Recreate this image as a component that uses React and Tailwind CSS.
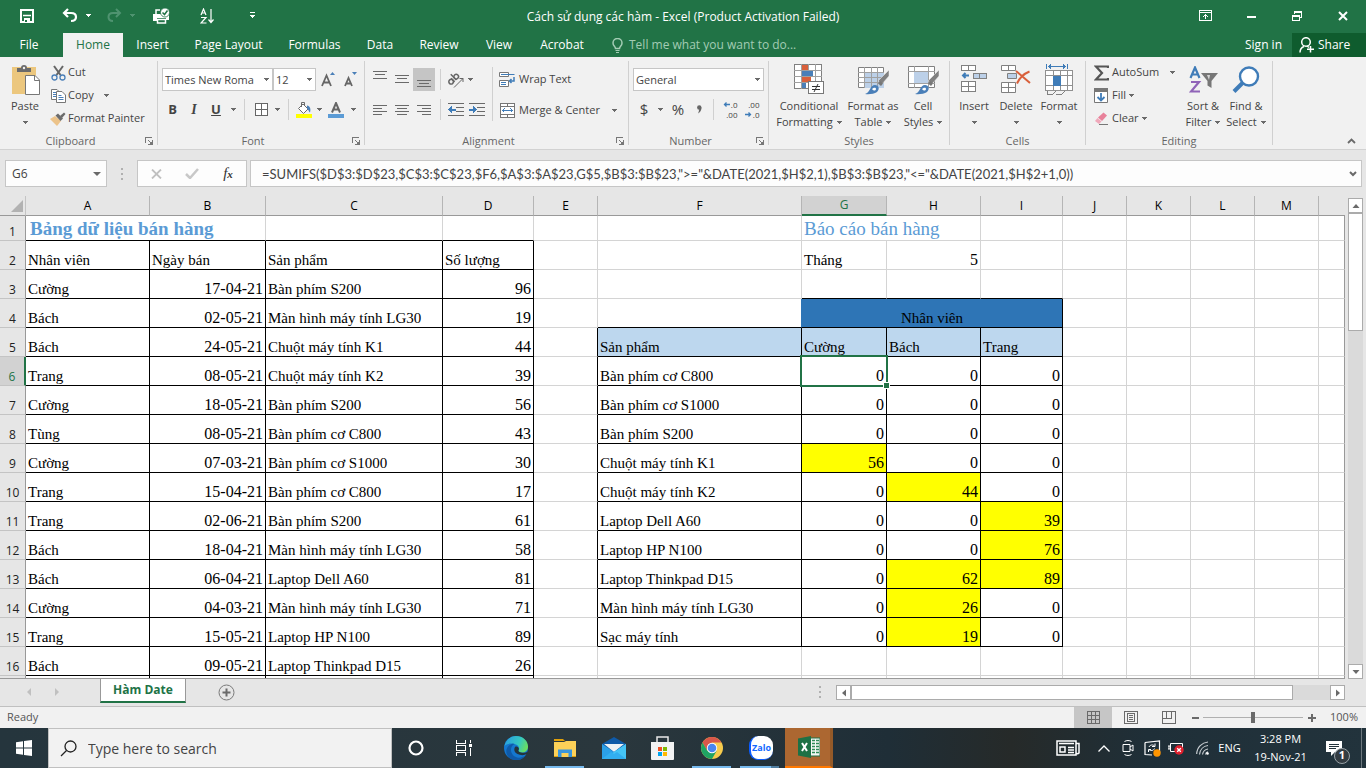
import clsx from 'clsx';

// ---------- spreadsheet data ----------

const SALES = [
  ['Cường', '17-04-21', 'Bàn phím S200', 96],
  ['Bách', '02-05-21', 'Màn hình máy tính LG30', 19],
  ['Bách', '24-05-21', 'Chuột máy tính K1', 44],
  ['Trang', '08-05-21', 'Chuột máy tính K2', 39],
  ['Cường', '18-05-21', 'Bàn phím S200', 56],
  ['Tùng', '08-05-21', 'Bàn phím cơ C800', 43],
  ['Cường', '07-03-21', 'Bàn phím cơ S1000', 30],
  ['Trang', '15-04-21', 'Bàn phím cơ C800', 17],
  ['Trang', '02-06-21', 'Bàn phím S200', 61],
  ['Bách', '18-04-21', 'Màn hình máy tính LG30', 58],
  ['Bách', '06-04-21', 'Laptop Dell A60', 81],
  ['Cường', '04-03-21', 'Màn hình máy tính LG30', 71],
  ['Trang', '15-05-21', 'Laptop HP N100', 89],
  ['Bách', '09-05-21', 'Laptop Thinkpad D15', 26],
];

const REPORT = {
  6: ['Bàn phím cơ C800', 0, 0, 0],
  7: ['Bàn phím cơ S1000', 0, 0, 0],
  8: ['Bàn phím S200', 0, 0, 0],
  9: ['Chuột máy tính K1', 56, 0, 0],
  10: ['Chuột máy tính K2', 0, 44, 0],
  11: ['Laptop Dell A60', 0, 0, 39],
  12: ['Laptop HP N100', 0, 0, 76],
  13: ['Laptop Thinkpad D15', 0, 62, 89],
  14: ['Màn hình máy tính LG30', 0, 26, 0],
  15: ['Sạc máy tính', 0, 19, 0],
};

const COLUMNS = [
  ['A', 'w-[124px]'],
  ['B', 'w-[116px]'],
  ['C', 'w-[177px]'],
  ['D', 'w-[91px]'],
  ['E', 'w-[64px]'],
  ['F', 'w-[204px]'],
  ['G', 'w-[85px]'],
  ['H', 'w-[94px]'],
  ['I', 'w-[82px]'],
  ['J', 'w-[64px]'],
  ['K', 'w-[64px]'],
  ['L', 'w-[64px]'],
  ['M', 'w-[64px]'],
  ['', ''],
];

const TABS = [
  ['File', 'w-[58px]'],
  ['Home', 'w-[60px]'],
  ['Insert', 'w-[59px]'],
  ['Page Layout', 'w-[93px]'],
  ['Formulas', 'w-[79px]'],
  ['Data', 'w-[52px]'],
  ['Review', 'w-[66px]'],
  ['View', 'w-[54px]'],
  ['Acrobat', 'w-[72px]'],
];

// ---------- small pieces ----------

function Svg({ w, h, crisp, className, children }) {
  return (
    <svg
      width={w}
      height={h}
      viewBox={`0 0 ${w} ${h}`}
      fill="none"
      shapeRendering={crisp ? 'crispEdges' : undefined}
      className={clsx('shrink-0', className)}
      aria-hidden="true"
    >
      {children}
    </svg>
  );
}

const Caret = ({ className = 'text-[#6a6a6a]' }) => (
  <Svg w={5} h={3} crisp className={className}>
    <path d="M0 0h5v1H0zM1 1h3v1H1zM2 2h1v1H2z" fill="currentColor" />
  </Svg>
);

const Separator = ({ className }) => <span className={clsx('w-px shrink-0 bg-[#d0d0d0]', className)} />;

// Horizontal strokes used by every paragraph/alignment icon
const Lines = ({ rows }) => (
  <Svg w={14} h={19} crisp>
    {rows.map(([x, y, len]) => (
      <rect key={`${x}-${y}`} x={x} y={y} width={len} height="1" fill="#6a6a6a" />
    ))}
  </Svg>
);

function ToolButton({ label, className, children }) {
  return (
    <button aria-label={label} className={clsx('flex h-[23px] shrink-0 items-center justify-center', className)}>
      {children}
    </button>
  );
}

function BigButton({ icon, lines, className }) {
  const [first, second] = lines;
  return (
    <button className={clsx('flex shrink-0 flex-col items-center whitespace-nowrap pt-1 leading-4', className)}>
      <span className="flex h-[37px] items-center">{icon}</span>
      <span>{first}</span>
      <span className="flex h-4 items-center gap-1">
        {second}
        <Caret />
      </span>
    </button>
  );
}

function SmallButton({ icon, label, caret, gap = 'gap-1' }) {
  return (
    <button className={clsx('flex h-[23px] items-center whitespace-nowrap', gap)}>
      <span className="flex w-4 justify-center">{icon}</span>
      {label}
      {caret && <Caret />}
    </button>
  );
}

function Group({ title, launcher, className, children }) {
  return (
    <section aria-label={title} className={clsx('flex shrink-0 border-0', className)}>
      <div className="flex min-w-0 flex-1 flex-col">
        <div className="flex h-[75px]">{children}</div>
        <div className="flex h-[17px] items-center pt-px">
          <span className="flex-1 text-center text-[#666]">{title}</span>
          {launcher && (
            <button aria-label={`${title} settings`} className="flex w-4 justify-center">
              <Svg w={8} h={8} crisp>
                <path d="M0.500 6V0.500H7" stroke="#777" />
                <path d="M3 3l4 4M7.500 3v4.500H3" stroke="#777" />
                <path d="M5 5h3v3H5z" fill="#777" />
              </Svg>
            </button>
          )}
        </div>
      </div>
      <Separator className="my-1" />
    </section>
  );
}

function Combo({ label, value, className }) {
  return (
    <span className={clsx('relative flex h-[23px] shrink-0', className)}>
      <select
        aria-label={label}
        defaultValue={value}
        className="w-full appearance-none border border-[#c6c6c6] bg-white pl-[2px] pt-px text-[#444] outline-none"
      >
        <option>{value}</option>
      </select>
      <span className="pointer-events-none absolute inset-y-0 right-1 flex items-center">
        <Caret />
      </span>
    </span>
  );
}

// ---------- ribbon icons ----------

const PasteIcon = () => (
  <Svg w={29} h={31}>
    <path d="M1 3h24v27H1z" fill="#ecc77e" />
    <path d="M6 8V4h4a3 3 0 0 1 6 0h4v4z" fill="#6b6b6b" />
    <circle cx="13" cy="4" r="1.2" fill="#f1f1f1" />
    <path d="M14.500 11.500H24L28.500 16v14.500h-14z" fill="#fff" stroke="#777" />
    <path d="M23.500 12v4.500H28" stroke="#777" />
  </Svg>
);

const CutIcon = () => (
  <Svg w={15} h={16}>
    <path d="M3 1l6.500 9M12 1L5.500 10" stroke="#666" strokeWidth="2" />
    <circle cx="3.500" cy="12.500" r="2.500" stroke="#4a7fb8" strokeWidth="1.300" />
    <circle cx="11.500" cy="12.500" r="2.500" stroke="#4a7fb8" strokeWidth="1.300" />
  </Svg>
);

const CopyIcon = () => (
  <Svg w={15} h={14}>
    <path d="M0.500 0.500H6L8.500 3v7.500h-8z" fill="#fff" stroke="#777" />
    <path d="M2 3.500h3M2 5.500h3M2 7.500h3" stroke="#4a7fb8" />
    <path d="M5.500 2.500H11L14.500 6v7.500h-9z" fill="#fff" stroke="#777" />
    <path d="M7.500 6.500h3M7.500 8.500h5M7.500 10.500h5" stroke="#4a7fb8" />
  </Svg>
);

const PainterIcon = () => (
  <Svg w={16} h={14}>
    <path d="M0 7l5-3 6 5-4 5z" fill="#ecc38a" />
    <path d="M5.500 3.500L8 1.500l5 5-2.500 2.500z" fill="#6b6b6b" />
    <path d="M10 4l4-3.500L15.500 2 12 6z" fill="#6b6b6b" />
  </Svg>
);

const GrowFont = ({ down }) => (
  <Svg w={14} h={16}>
    {down ? (
      <path d="M9 0h5l-2.500 3z" fill="#4a7fb8" />
    ) : (
      <path d="M9 3h5l-2.500-3z" fill="#4a7fb8" />
    )}
    {down ? (
      <path d="M2 14l3.500-8 3.500 8M3.300 11.500h4.400" stroke="#666" strokeWidth="1.800" />
    ) : (
      <path d="M1 14L5.500 3.500l4.500 10.500M2.700 10.500h5.600" stroke="#666" strokeWidth="1.800" />
    )}
  </Svg>
);

const BordersIcon = () => (
  <Svg w={13} h={13} crisp>
    <path d="M0.500 0.500h12v12h-12zM6.500 0v13M0 6.500h13" stroke="#666" fill="#fff" />
  </Svg>
);

const BucketIcon = () => (
  <Svg w={16} h={16}>
    <path d="M2.500 6.500L7 2l5 5-4.500 4.500z" fill="#fff" stroke="#6b6b6b" />
    <path d="M5.500 5V0.500h3V4" stroke="#6b6b6b" />
    <path d="M11 3.500c3 .5 4 3 3 7-1.200-.8-1.500-3-3-4z" fill="#4a7fb8" />
    <path d="M0 12h16v4H0z" fill="#ffff00" />
  </Svg>
);

const FontColorIcon = () => (
  <Svg w={16} h={16}>
    <path d="M4 10.500L8 1l4 9.500M5.400 7.500h5.200" stroke="#666" strokeWidth="2" />
    <path d="M0 12h16v4H0z" fill="#5b9bd5" />
  </Svg>
);

const OrientationIcon = () => (
  <Svg w={18} h={16}>
    <g transform="rotate(-45 8 8)" stroke="#666" strokeWidth="1.500">
      <circle cx="4" cy="6.500" r="2.300" />
      <path d="M6.500 4v5M9 1v8" />
      <circle cx="11.200" cy="6.500" r="2.300" />
    </g>
    <path d="M7 15.500L16 6.500M12.500 6.500H16V10" stroke="#666" />
  </Svg>
);

const IndentIcon = ({ right }) => (
  <Svg w={16} h={14} crisp>
    <path d="M0 0.500h16M8 4.500h8M8 8.500h8M0 12.500h16" stroke="#6a6a6a" />
    {right ? (
      <path d="M0 6h4V3l3.500 3.500L4 10V8H0z" fill="#3f7cb8" />
    ) : (
      <path d="M7.500 6H4V3L0 6.500 4 10V8h3.500z" fill="#3f7cb8" />
    )}
  </Svg>
);

const WrapIcon = () => (
  <Svg w={16} h={16}>
    <path d="M0.500 0.500h9v4h-9zM0.500 8.500h9v6h-9z" fill="#fff" stroke="#777" />
    <path d="M2 2.500h13.500M2 10.500h5M2 12.500h5" stroke="#3f7cb8" />
    <path d="M15 5v4h-4M12.500 7L10.500 9l2 2" stroke="#3f7cb8" strokeWidth="1.500" />
  </Svg>
);

const MergeIcon = () => (
  <Svg w={15} h={15} crisp>
    <path d="M0.500 0.500h14v14h-14zM0 3.500h15M0 11.500h15M7.500 0v3M7.500 12v3" fill="#fff" stroke="#777" />
    <path d="M2 7.500h11M4.500 5.500l-2 2 2 2M10.500 5.500l2 2-2 2" stroke="#3f7cb8" />
  </Svg>
);

const DecimalIcon = ({ decrease }) => (
  <span className="flex w-[17px] flex-col text-[8px] leading-[10px] text-[#444]">
    <span className="flex items-center justify-end gap-[1px]">
      {!decrease && (
        <Svg w={7} h={5}>
          <path d="M7 2.500H1.500M3.500 0.500l-2 2 2 2" stroke="#3f7cb8" strokeWidth="1.300" />
        </Svg>
      )}
      {decrease ? '.00' : '.0'}
    </span>
    <span className="flex items-center justify-end gap-[1px]">
      {decrease && (
        <Svg w={7} h={5}>
          <path d="M0 2.500h5.500M3.500 0.500l2 2-2 2" stroke="#3f7cb8" strokeWidth="1.300" />
        </Svg>
      )}
      {decrease ? '.0' : '.00'}
    </span>
  </span>
);

const ConditionalIcon = () => (
  <Svg w={31} h={31} crisp>
    <path d="M0.500 0.500h27v24h-27z" fill="#fff" stroke="#808080" />
    <path d="M0 6.500h28M0 12.500h28M0 18.500h28M7.500 0v25M14.500 0v25M21.500 0v25" stroke="#a0a0a0" />
    <path d="M8 1h6v5H8zM8 13h9v5H8z" fill="#d9603b" />
    <path d="M8 7h11v5H8zM8 19h4v5H8z" fill="#4a7fb8" />
    <path d="M14.500 17.500h15v12h-15z" fill="#fff" stroke="#777" />
    <path d="M18 22h8v1h-8zM18 25h8v1h-8z" fill="#333" />
    <path d="M20 28l4-8" stroke="#333" shapeRendering="auto" />
  </Svg>
);

const BrushOver = () => (
  <>
    <path d="M31 5v6l-7 8-4-3z" fill="#808080" stroke="#f1f1f1" strokeWidth="0.500" />
    <path d="M22 16l3 2.500-2 2.500-3-2.500z" fill="#777" />
    <path d="M7 29c5-1 5-9 10-9 4 0 5 4 2 7-3 2-8 2.500-12 2z" fill="#4a7fb8" />
    <path d="M14 24c2-2 4-1.500 4 0s-2 2.500-4 0z" fill="#fff" />
  </>
);

const FormatTableIcon = () => (
  <Svg w={31} h={30}>
    <path d="M0.500 2.500h25v20h-25z" fill="#fff" stroke="#808080" />
    <path d="M7 8h19v15H7z" fill="#bcd0e8" />
    <path d="M0 7.500h26M0 12.500h26M0 17.500h26M6.500 2v21M13.500 2v21M19.500 2v21" stroke="#a0a0a0" />
    <BrushOver />
  </Svg>
);

const CellStylesIcon = () => (
  <Svg w={31} h={30}>
    <path d="M0.500 1.500h26v21h-26z" fill="#fff" stroke="#808080" />
    <path d="M0 6.500h27M0 18.500h27M6.500 1v22M20.500 1v22" stroke="#a0a0a0" />
    <path d="M6 7h14v11H6z" fill="#bcd0e8" />
    <BrushOver />
  </Svg>
);

const InsertIcon = () => (
  <Svg w={27} h={29} crisp>
    <path d="M0.500 0.500h14v5h-14zM7.500 0v6M0.500 16.500h14v10h-14zM7.500 16v11M0 21.500h15" fill="#fff" stroke="#808080" />
    <path d="M12.500 8.500h13v5h-13zM18.500 8v6" fill="#bcd0e8" stroke="#808080" />
    <path d="M8 10.500H2M4.500 8l-2.500 2.500L4.500 13" stroke="#3f7cb8" strokeWidth="2" shapeRendering="auto" />
  </Svg>
);

const DeleteIcon = () => (
  <Svg w={30} h={29}>
    <path d="M0.500 0.500h14v5h-14zM7.500 0v6M0.500 17.500h14v10h-14zM7.500 17v11M0 22.500h15" fill="#fff" stroke="#808080" />
    <path d="M6.500 8.500h9v5h-9z" fill="#bcd0e8" stroke="#808080" />
    <path d="M15 6l14 12M28.500 6.500C22 9 18 14 16 18.500" stroke="#d9603b" strokeWidth="2" />
  </Svg>
);

const FormatIcon = () => (
  <Svg w={29} h={32} crisp>
    <path d="M1.500 0v5M22.500 0v5M3 2.500h18M6 0.500l-2.500 2L6 4.500M18 0.500l2.500 2-2.500 2" stroke="#3f7cb8" />
    <path d="M0.500 6.500h27v20h-27zM0 11.500h28M0 21.500h28M8.500 6v21M15.500 6v21M22.500 6v21" fill="#fff" stroke="#909090" />
    <path d="M8 12h8v10H8z" fill="#3f7cb8" />
    <path d="M2 27v3h6l3-3M11 30h6l3-3" stroke="#808080" />
  </Svg>
);

const SumIcon = () => (
  <Svg w={15} h={16}>
    <path d="M14 3V1.500H2L8 8l-6 6.500h12V13" stroke="#555" strokeWidth="2.200" />
  </Svg>
);

const FillIcon = () => (
  <Svg w={14} h={15}>
    <path d="M0.500 0.500h13v14h-13z" fill="#fff" stroke="#777" />
    <path d="M0 0h14v4H0z" fill="#777" />
    <path d="M7 5v7.500M3.500 9L7 12.500 10.500 9" stroke="#3f7cb8" strokeWidth="1.800" />
  </Svg>
);

const EraserIcon = () => (
  <Svg w={15} h={14}>
    <path d="M4 5.500L9.500 0.500 13 3.500 8 9z" fill="#e8819a" />
    <path d="M3.500 6L7.500 9.500 5 12 1 9z" fill="#f0a8ba" />
    <path d="M5 12.500h9" stroke="#777" />
  </Svg>
);

const SortFilterIcon = () => (
  <Svg w={29} h={27}>
    <path d="M1.500 12L6 1.500 10.500 12M3 8.500h6" stroke="#3f7cb8" strokeWidth="2.200" />
    <path d="M2 16h8L2 25.500h9" stroke="#9064b8" strokeWidth="2.200" />
    <path d="M12 7h17l-6.500 8v7l-4-2.500V15z" fill="#777" />
    <path d="M18 9h3l-1 5z" fill="#fff" opacity=".7" />
  </Svg>
);

const FindIcon = () => (
  <Svg w={28} h={28}>
    <circle cx="17" cy="10.500" r="9" fill="#fff" stroke="#3f7cb8" strokeWidth="2.400" />
    <path d="M10.500 17L2 25.500" stroke="#3f7cb8" strokeWidth="4" />
  </Svg>
);

// ---------- window chrome ----------

function TitleBar() {
  return (
    <header className="relative flex h-[33px] shrink-0 items-center justify-between bg-[#217346] pb-[2px] text-white">
      <div className="flex items-center pl-5">
        <button aria-label="Save" className="w-[42px]">
          <Svg w={14} h={14}>
            <path d="M1 1h12v12H1z" stroke="#fff" strokeWidth="2" />
            <path d="M3 6.500h8" stroke="#fff" strokeWidth="1.500" />
            <path d="M4 9h6v5H4z" fill="#fff" />
            <path d="M5 11h2v2H5z" fill="#217346" />
          </Svg>
        </button>
        <button aria-label="Undo" className="flex w-[45px] items-center gap-2">
          <Svg w={16} h={15}>
            <path d="M6 1L2 5l4 4M2 5h7c3 0 5 1.500 5 4s-2 4-5 4" stroke="#fff" strokeWidth="2.200" />
          </Svg>
          <Caret className="text-white" />
        </button>
        <button aria-label="Redo" className="flex w-[46px] items-center gap-2">
          <Svg w={15} h={15}>
            <path d="M9 1l4 4-4 4M13 5H6C3 5 1.500 6.500 1.500 9S3 13 6 13" stroke="#4f9370" strokeWidth="2" />
          </Svg>
          <Caret className="text-[#4f9370]" />
        </button>
        <button aria-label="Print Preview and Print" className="w-[47px]">
          <Svg w={17} h={16}>
            <path d="M3 6V2h4" stroke="#fff" strokeWidth="1.500" />
            <path d="M0 6h16v6h-3V10H4v3H0z" fill="#fff" />
            <path d="M4.500 11.500h8v3.500h-8z" stroke="#fff" strokeWidth="1.500" />
            <circle cx="12" cy="4.500" r="4.500" fill="#fff" stroke="#217346" strokeWidth="0.800" />
            <path d="M9.500 4.500l2 2 3-4" stroke="#217346" strokeWidth="1.500" />
          </Svg>
        </button>
        <button aria-label="Sort Ascending" className="w-[50px]">
          <Svg w={14} h={16}>
            <path d="M1 7l2.500-6L6 7M1.800 5h3.400M1 9.500h5L1 15h5.500" stroke="#fff" strokeWidth="1.200" />
            <path d="M11 1v13M8.500 11.500L11 14.500l2.500-3" stroke="#fff" strokeWidth="1.200" />
          </Svg>
        </button>
        <button aria-label="Customize Quick Access Toolbar">
          <Svg w={5} h={7} crisp>
            <path d="M0 0h5v1H0zM0 3h5v1H0zM1 4h3v1H1zM2 5h1v1H2z" fill="#fff" />
          </Svg>
        </button>
      </div>
      <h1 className="pointer-events-none absolute inset-0 flex items-center justify-center text-[12px]">
        Cách sử dụng các hàm - Excel (Product Activation Failed)
      </h1>
      <div className="flex items-center">
        <button aria-label="Ribbon Display Options" className="flex w-[46px] justify-center">
          <Svg w={13} h={11} crisp>
            <path d="M0.500 0.500h12v10h-12zM0 2.500h13M6.500 9V5M4 7l2.500-2.500L9 7" stroke="#fff" />
          </Svg>
        </button>
        <button aria-label="Minimize" className="flex w-[46px] justify-center">
          <Svg w={9} h={4} crisp>
            <path d="M0 2h9v2H0z" fill="#fff" />
          </Svg>
        </button>
        <button aria-label="Restore Down" className="flex w-[46px] justify-center">
          <Svg w={10} h={10} crisp>
            <path d="M0.500 4.500h7v5h-7zM0 5h8M2.500 3V0.500h7v6H8M2 1h8" stroke="#fff" />
          </Svg>
        </button>
        <button aria-label="Close" className="flex w-[46px] justify-center">
          <Svg w={10} h={10}>
            <path d="M1 1l8 8M9 1L1 9" stroke="#fff" strokeWidth="2" />
          </Svg>
        </button>
      </div>
    </header>
  );
}

function RibbonTabs() {
  return (
    <nav className="flex h-6 shrink-0 items-stretch bg-[#217346] text-[12px] text-white">
      {TABS.map(([name, width]) => (
        <button
          key={name}
          className={clsx(
            'shrink-0 whitespace-nowrap',
            width,
            name === 'Home' && 'ml-[5px] bg-[#f1f1f1] text-[#217346]',
          )}
        >
          {name}
        </button>
      ))}
      <button className="ml-[14px] flex items-center gap-[6px] whitespace-nowrap text-[#a3ccb4]">
        <Svg w={11} h={15}>
          <path d="M3.500 10.500c0-2-2.500-2.500-2.500-5.500a4.500 4.500 0 0 1 9 0c0 3-2.500 3.500-2.500 5.500z" stroke="#a3ccb4" strokeWidth="1.500" />
          <path d="M3.500 12.500h4M4 14.500h3" stroke="#a3ccb4" />
        </Svg>
        Tell me what you want to do...
      </button>
      <button className="ml-auto px-[10px]">Sign in</button>
      <button className="flex w-[74px] items-center gap-1 bg-[#0f5c2e] pl-[7px]">
        <Svg w={15} h={16}>
          <circle cx="7" cy="5" r="4.300" stroke="#fff" strokeWidth="1.500" />
          <path d="M1 15.500c0-3 1.500-5 4-6M8 9l2 1.500M11.500 9v6.500M8 12.300h7" stroke="#fff" strokeWidth="1.500" />
        </Svg>
        Share
      </button>
    </nav>
  );
}

function Ribbon() {
  return (
    <div className="flex h-[93px] shrink-0 overflow-hidden border-b border-[#d2d2d2] bg-[#f1f1f1] text-[11px] text-[#444]">
      <Group title="Clipboard" launcher className="w-[158px]">
        <BigButton icon={<PasteIcon />} lines={['Paste', '']} className="w-[50px]" />
        <div className="flex flex-col items-start pt-1">
          <SmallButton icon={<CutIcon />} label="Cut" gap="gap-[2px]" />
          <SmallButton icon={<CopyIcon />} label={<span className="mr-2">Copy</span>} caret gap="gap-[2px]" />
          <SmallButton icon={<PainterIcon />} label="Format Painter" gap="gap-[2px]" />
        </div>
      </Group>

      <Group title="Font" launcher className="w-[207px]">
        <div className="flex flex-col gap-[7px] pl-1 pt-[11px]">
          <div className="flex">
            <Combo label="Font" value="Times New Roma" className="w-[111px]" />
            <Combo label="Font Size" value="12" className="w-[43px]" />
            <ToolButton label="Increase Font Size" className="w-6"><GrowFont /></ToolButton>
            <ToolButton label="Decrease Font Size" className="w-5"><GrowFont down /></ToolButton>
          </div>
          <div className="flex items-center text-[13px] font-bold">
            <ToolButton label="Bold" className="w-[21px]">B</ToolButton>
            <ToolButton label="Italic" className="w-[22px] font-['Liberation_Serif',serif] text-[14px] italic">I</ToolButton>
            <ToolButton label="Underline" className="w-[22px] underline">U</ToolButton>
            <ToolButton label="Underline styles" className="w-3"><Caret /></ToolButton>
            <Separator className="mx-[5px] h-[21px]" />
            <ToolButton label="Borders" className="w-[22px]"><BordersIcon /></ToolButton>
            <ToolButton label="Border styles" className="w-[11px]"><Caret /></ToolButton>
            <Separator className="mx-[5px] h-[21px]" />
            <ToolButton label="Fill Color" className="w-5"><BucketIcon /></ToolButton>
            <ToolButton label="Fill colors" className="w-[10px]"><Caret /></ToolButton>
            <ToolButton label="Font Color" className="w-6"><FontColorIcon /></ToolButton>
            <ToolButton label="Font colors" className="w-[10px]"><Caret /></ToolButton>
          </div>
        </div>
      </Group>

      <Group title="Alignment" launcher className="w-[264px]">
        <div className="flex w-[123px] flex-col gap-[7px] pl-1 pt-[11px]">
          <div className="flex items-center">
            <ToolButton label="Top Align" className="w-[22px]"><Lines rows={[[0, 1, 14], [2, 4, 10], [0, 8, 14]]} /></ToolButton>
            <ToolButton label="Middle Align" className="w-[22px]"><Lines rows={[[0, 5, 14], [2, 8, 10], [0, 12, 14]]} /></ToolButton>
            <ToolButton label="Bottom Align" className="w-[22px] bg-[#c5c5c5]"><Lines rows={[[0, 10, 14], [2, 13, 10], [0, 16, 14]]} /></ToolButton>
            <Separator className="mx-[5px] h-[21px]" />
            <ToolButton label="Orientation" className="w-5"><OrientationIcon /></ToolButton>
            <ToolButton label="Orientation options" className="w-2"><Caret /></ToolButton>
          </div>
          <div className="flex items-center">
            <ToolButton label="Align Left" className="w-[22px]"><Lines rows={[[0, 5, 14], [0, 8, 9], [0, 11, 14], [0, 14, 9]]} /></ToolButton>
            <ToolButton label="Center" className="w-[22px]"><Lines rows={[[0, 5, 14], [2, 8, 10], [0, 11, 14], [2, 14, 10]]} /></ToolButton>
            <ToolButton label="Align Right" className="w-[22px]"><Lines rows={[[0, 5, 14], [5, 8, 9], [0, 11, 14], [5, 14, 9]]} /></ToolButton>
            <Separator className="mx-[5px] h-[21px]" />
            <ToolButton label="Decrease Indent" className="w-5"><IndentIcon /></ToolButton>
            <ToolButton label="Increase Indent" className="w-[22px]"><IndentIcon right /></ToolButton>
          </div>
        </div>
        <Separator className="mx-[4px] mt-[10px] h-[54px]" />
        <div className="flex flex-col items-start gap-[8px] pl-[2px] pt-[11px]">
          <SmallButton icon={<WrapIcon />} label="Wrap Text" />
          <SmallButton icon={<MergeIcon />} label={<span className="mr-2">Merge &amp; Center</span>} caret />
        </div>
      </Group>

      <Group title="Number" launcher className="w-[140px]">
        <div className="flex flex-col gap-[7px] pl-1 pt-[11px]">
          <Combo label="Number Format" value="General" className="w-[131px]" />
          <div className="flex items-center text-[15px]">
            <ToolButton label="Accounting Number Format" className="w-[22px]">$</ToolButton>
            <ToolButton label="Currencies" className="w-[10px]"><Caret /></ToolButton>
            <ToolButton label="Percent Style" className="w-[26px]">%</ToolButton>
            <ToolButton label="Comma Style" className="w-[17px]">
              <Svg w={5} h={9}>
                <circle cx="2.300" cy="2.500" r="2.200" fill="#666" />
                <path d="M4.500 2.500c0 3-1.500 5-3.500 6 .7-1.500 1-2.500 1-4z" fill="#666" />
              </Svg>
            </ToolButton>
            <Separator className="mx-[5px] h-[21px]" />
            <ToolButton label="Increase Decimal" className="w-5"><DecimalIcon /></ToolButton>
            <ToolButton label="Decrease Decimal" className="w-6"><DecimalIcon decrease /></ToolButton>
          </div>
        </div>
      </Group>

      <Group title="Styles" className="w-[181px]">
        <div className="flex pl-[5px]">
          <BigButton icon={<ConditionalIcon />} lines={['Conditional', 'Formatting']} className="w-[70px]" />
          <BigButton icon={<FormatTableIcon />} lines={['Format as', 'Table']} className="w-[58px]" />
          <BigButton icon={<CellStylesIcon />} lines={['Cell', 'Styles']} className="w-[42px]" />
        </div>
      </Group>

      <Group title="Cells" className="w-[136px]">
        <div className="flex pl-1">
          <BigButton icon={<InsertIcon />} lines={['Insert', '']} className="w-[40px]" />
          <BigButton icon={<DeleteIcon />} lines={['Delete', '']} className="w-[44px]" />
          <BigButton icon={<FormatIcon />} lines={['Format', '']} className="w-[42px]" />
        </div>
      </Group>

      <Group title="Editing" className="w-[187px]">
        <div className="flex w-[97px] flex-col items-start pl-[7px] pt-1">
          <SmallButton icon={<SumIcon />} label={<span className="mr-2">AutoSum</span>} caret gap="gap-[3px]" />
          <SmallButton icon={<FillIcon />} label="Fill" caret gap="gap-[3px]" />
          <SmallButton icon={<EraserIcon />} label="Clear" caret gap="gap-[3px]" />
        </div>
        <BigButton icon={<SortFilterIcon />} lines={['Sort &', 'Filter']} className="w-[40px]" />
        <BigButton icon={<FindIcon />} lines={['Find &', 'Select']} className="w-[46px]" />
      </Group>

      <button aria-label="Collapse the Ribbon" className="ml-auto self-end px-[10px] pb-[5px]">
        <Svg w={9} h={6}>
          <path d="M1 5l3.500-3.500L8 5" stroke="#6a6a6a" strokeWidth="1.800" />
        </Svg>
      </button>
    </div>
  );
}

function FormulaBar() {
  return (
    <div className="flex h-[46px] shrink-0 pb-[9px] pl-[5px] pr-1 pt-[10px] text-[#444]">
      <div className="flex w-[102px] shrink-0 items-center border border-[#c6c6c6] bg-[#fdfdfd] pr-[5px]">
        <input aria-label="Name Box" defaultValue="G6" className="w-0 flex-1 bg-transparent pl-[6px] text-[12px] outline-none" />
        <Svg w={8} h={4}>
          <path d="M0 0h8L4 4z" fill="#6a6a6a" />
        </Svg>
      </div>
      <div className="flex w-[30px] shrink-0 flex-col items-center justify-center gap-[3px]">
        <i className="size-[2px] bg-[#b0b0b0]" />
        <i className="size-[2px] bg-[#b0b0b0]" />
        <i className="size-[2px] bg-[#b0b0b0]" />
      </div>
      <div className="flex w-[110px] shrink-0 items-center border border-[#c6c6c6] bg-[#fdfdfd]">
        <button aria-label="Cancel" className="flex w-9 justify-center">
          <Svg w={11} h={10}>
            <path d="M1 0.500l9 9M10 0.500l-9 9" stroke="#c0c0c0" strokeWidth="1.800" />
          </Svg>
        </button>
        <button aria-label="Enter" className="flex w-9 justify-center">
          <Svg w={14} h={11}>
            <path d="M1 6l4 4 8-9" stroke="#c8c8c8" strokeWidth="2.500" />
          </Svg>
        </button>
        <button aria-label="Insert Function" className="flex w-9 items-baseline justify-center font-['Liberation_Serif',serif] text-[15px] italic text-[#333]">
          f<span className="text-[11px] font-bold">x</span>
        </button>
      </div>
      <div className="ml-[3px] flex min-w-0 flex-1 items-center border border-[#c6c6c6] bg-[#fdfdfd] pr-1">
        <input
          aria-label="Formula Bar"
          className="h-full min-w-0 flex-1 bg-transparent pl-[11px] font-['Lato',sans-serif] text-[13px] outline-none"
          defaultValue={'=SUMIFS($D$3:$D$23,$C$3:$C$23,$F6,$A$3:$A$23,G$5,$B$3:$B$23,">="&DATE(2021,$H$2,1),$B$3:$B$23,"<="&DATE(2021,$H$2+1,0))'}
        />
        <Svg w={8} h={6}>
          <path d="M1 1l3 3 3-3" stroke="#6a6a6a" strokeWidth="2" />
        </Svg>
      </div>
    </div>
  );
}

// ---------- worksheet ----------

const LIGHT = 'border-r-[#d4d4d4] border-b-[#d4d4d4]';
const BLACK = 'border-r-black border-b-black';
const LIGHT_R = 'border-r-[#d4d4d4] border-b-black';
const LIGHT_B = 'border-r-black border-b-[#d4d4d4]';

function Cell({ lines = LIGHT, className, ...rest }) {
  return <td className={clsx('overflow-hidden whitespace-nowrap border-b border-r px-[2px] align-bottom', lines, className)} {...rest} />;
}

function NumberCell({ className, ...rest }) {
  return <Cell className={clsx('text-right text-[16px]', className)} {...rest} />;
}

function RowHeader({ row }) {
  return (
    <th
      scope="row"
      className={clsx(
        "border-b border-b-[#c4c4c4] p-0 align-bottom font-['Open_Sans',sans-serif] text-[12px] font-normal leading-4",
        row === 6
          ? 'border-r-2 border-r-[#217346] bg-[#d2d2d2] text-[#217346]'
          : 'border-r border-r-[#999] bg-[#e6e6e6] text-[#222]',
      )}
    >
      {row}
    </th>
  );
}

// Columns J to M plus the partly visible last one
const TrailingCells = () => (
  <>
    <Cell />
    <Cell />
    <Cell />
    <Cell />
    <Cell lines="border-r-[#999] border-b-[#d4d4d4]" />
  </>
);

function ReportCells({ row }) {
  if (row === 2) {
    return (
      <>
        <Cell />
        <Cell />
        <Cell>Tháng</Cell>
        <NumberCell>5</NumberCell>
        <Cell />
      </>
    );
  }
  if (row === 3) {
    return (
      <>
        <Cell />
        <Cell />
        <Cell lines={LIGHT_R} />
        <Cell lines={LIGHT_R} />
        <Cell lines={LIGHT_R} />
      </>
    );
  }
  if (row === 4) {
    return (
      <>
        <Cell />
        <Cell lines="border-r-[#2e75b6] border-b-black" />
        <Cell lines={BLACK} colSpan={3} className="bg-[#2e75b6] text-center">Nhân viên</Cell>
      </>
    );
  }
  if (row === 5) {
    return (
      <>
        <Cell lines={LIGHT_B} />
        {['Sản phẩm', 'Cường', 'Bách', 'Trang'].map((text) => (
          <Cell key={text} lines={BLACK} className="bg-[#bdd7ee]">{text}</Cell>
        ))}
      </>
    );
  }
  if (!REPORT[row]) {
    return (
      <>
        <Cell />
        <Cell />
        <Cell />
        <Cell />
        <Cell />
      </>
    );
  }
  const [product, ...totals] = REPORT[row];
  return (
    <>
      <Cell lines={LIGHT_B} />
      <Cell lines={BLACK}>{product}</Cell>
      {totals.map((total, i) =>
        row === 6 && i === 0 ? (
          <td key={i} className="relative border-b border-r border-black px-[2px] text-right align-bottom text-[16px]">
            {total}
            {/* active cell frame and fill handle */}
            <span className="pointer-events-none absolute -inset-[2px] border-2 border-[#217346]" />
            <span className="absolute -bottom-[4px] -right-[4px] size-[7px] border border-white bg-[#217346]" />
          </td>
        ) : (
          <NumberCell key={i} lines={BLACK} className={total > 0 && 'bg-[#ffff00]'}>
            {total}
          </NumberCell>
        ),
      )}
    </>
  );
}

function Sheet() {
  return (
    <div className="min-w-0 flex-1 overflow-hidden border-b border-[#999]">
      <table className="w-full table-fixed border-separate border-spacing-0 bg-white font-['Liberation_Serif',serif] text-[15px] leading-[18px] text-black">
        <thead>
          <tr className="h-5 font-['Open_Sans',sans-serif] text-[12px]">
            <th className="w-[26px] border-b border-r border-b-[#999] border-r-[#c4c4c4] bg-[#e6e6e6] p-0">
              <Svg w={12} h={12} className="ml-[11px]">
                <path d="M12 0v12H0z" fill="#b2b2b2" />
              </Svg>
            </th>
            {COLUMNS.map(([name, width]) => (
              <th
                key={name}
                scope="col"
                className={clsx(
                  'p-0 font-normal',
                  width,
                  name === 'G'
                    ? 'border-b-2 border-r border-b-[#217346] border-r-[#b5b5b5] bg-[#d2d2d2] text-[#217346]'
                    : 'border-b border-b-[#999] bg-[#e6e6e6]',
                  name && name !== 'G' && 'border-r border-r-[#b5b5b5]',
                )}
              >
                {name}
              </th>
            ))}
          </tr>
        </thead>
        <tbody>
          <tr className="h-[25px]">
            <RowHeader row={1} />
            <Cell colSpan={2} lines={LIGHT_R} className="pl-1 text-[19px] font-bold leading-[22px] text-[#5b9bd5]">
              Bảng dữ liệu bán hàng
            </Cell>
            <Cell lines={LIGHT_R} />
            <Cell lines={LIGHT_R} />
            <Cell />
            <Cell />
            <Cell colSpan={2} className="text-[19px] leading-[22px] text-[#5b9bd5]">Báo cáo bán hàng</Cell>
            <Cell />
            <TrailingCells />
          </tr>
          <tr className="h-[29px]">
            <RowHeader row={2} />
            {['Nhân viên', 'Ngày bán', 'Sản phẩm', 'Số lượng'].map((text) => (
              <Cell key={text} lines={BLACK}>{text}</Cell>
            ))}
            <ReportCells row={2} />
            <TrailingCells />
          </tr>
          {SALES.map(([person, date, product, amount], i) => (
            <tr key={i} className="h-[29px]">
              <RowHeader row={i + 3} />
              <Cell lines={BLACK}>{person}</Cell>
              <NumberCell lines={BLACK}>{date}</NumberCell>
              <Cell lines={BLACK}>{product}</Cell>
              <NumberCell lines={BLACK}>{amount}</NumberCell>
              <ReportCells row={i + 3} />
              <TrailingCells />
            </tr>
          ))}
          <tr className="h-[29px]">
            <RowHeader />
            <Cell lines={BLACK} />
            <Cell lines={BLACK} />
            <Cell lines={BLACK} />
            <Cell lines={BLACK} />
            <ReportCells />
            <TrailingCells />
          </tr>
        </tbody>
      </table>
    </div>
  );
}

function ScrollButton({ label, d, className }) {
  return (
    <button aria-label={label} className={clsx('flex size-[15px] shrink-0 items-center justify-center border border-[#ababab] bg-white', className)}>
      <Svg w={8} h={8}>
        <path d={d} fill="#6a6a6a" />
      </Svg>
    </button>
  );
}

function SheetBar() {
  return (
    <div className="flex h-[27px] shrink-0 items-start">
      <div className="flex h-[26px] w-[100px] items-center gap-[22px] pl-[26px]">
        <button aria-label="Previous sheet">
          <Svg w={6} h={8}><path d="M5 0v8L1 4z" fill="#c0c0c0" /></Svg>
        </button>
        <button aria-label="Next sheet">
          <Svg w={6} h={8}><path d="M1 0v8l4-4z" fill="#c0c0c0" /></Svg>
        </button>
      </div>
      <button className="h-6 w-[86px] border-x border-b-2 border-x-[#999] border-b-[#217346] bg-white text-[12px] font-bold text-[#217346]">
        Hàm Date
      </button>
      <button aria-label="New sheet" className="ml-8 mt-[5px]">
        <Svg w={17} h={17}>
          <circle cx="8.500" cy="8.500" r="7.500" stroke="#7a7a7a" />
          <path d="M8.500 4.500v8M4.500 8.500h8" stroke="#6a6a6a" strokeWidth="2" />
        </Svg>
      </button>
      <div className="ml-auto mr-[21px] mt-[6px] flex w-[526px] shrink-0">
        <div className="flex w-[17px] flex-col gap-[3px] pt-[1px]">
          <i className="size-[2px] bg-[#b0b0b0]" />
          <i className="size-[2px] bg-[#b0b0b0]" />
          <i className="size-[2px] bg-[#b0b0b0]" />
        </div>
        <div className="flex flex-1 bg-[#dadada]">
          <ScrollButton label="Scroll left" d="M6 0.500v7L2 4z" />
          <span className="w-[442px] border border-[#ababab] bg-white" />
          <ScrollButton label="Scroll right" d="M2 0.500v7L6 4z" className="ml-auto" />
        </div>
      </div>
    </div>
  );
}

function StatusBar() {
  return (
    <footer className="flex h-[22px] shrink-0 items-center border-t border-[#c0c0c0] bg-[#f1f1f1] text-[11px] text-[#555]">
      <span className="pl-[7px]">Ready</span>
      <div className="ml-auto flex h-full items-center">
        <button aria-label="Normal view" className="flex h-full w-[38px] items-center justify-center bg-[#c6c6c6]">
          <Svg w={13} h={13} crisp>
            <path d="M0.500 0.500h12v12h-12zM4.500 0v13M8.500 0v13M0 4.500h13M0 8.500h13" stroke="#6a6a6a" />
          </Svg>
        </button>
        <button aria-label="Page Layout view" className="flex h-full w-[38px] items-center justify-center">
          <Svg w={14} h={13} crisp>
            <path d="M0.500 0.500h13v12h-13zM3.500 2.500h7v8h-7zM5 4.500h4M5 6.500h4M5 8.500h4" stroke="#6a6a6a" />
          </Svg>
        </button>
        <button aria-label="Page Break Preview" className="flex h-full w-[38px] items-center justify-center">
          <Svg w={14} h={13} crisp>
            <path d="M0.500 0.500h13v12h-13zM4.500 0v7.500M9.500 0v7.500H0" stroke="#6a6a6a" />
          </Svg>
        </button>
        <button aria-label="Zoom Out" className="flex w-[15px] justify-center">
          <Svg w={7} h={2} crisp><path d="M0 0h7v2H0z" fill="#6a6a6a" /></Svg>
        </button>
        <input
          type="range"
          aria-label="Zoom"
          defaultValue="50"
          className="h-[11px] w-[100px] appearance-none bg-[linear-gradient(#b0b0b0,#b0b0b0)] bg-[length:100%_1px] bg-center bg-no-repeat [&::-webkit-slider-thumb]:h-[11px] [&::-webkit-slider-thumb]:w-1 [&::-webkit-slider-thumb]:appearance-none [&::-webkit-slider-thumb]:bg-[#6a6a6a]"
        />
        <button aria-label="Zoom In" className="flex w-[17px] justify-center">
          <Svg w={8} h={8} crisp><path d="M0 3h8v2H0zM3 0h2v8H3z" fill="#6a6a6a" /></Svg>
        </button>
        <span className="w-[46px] pr-2 text-right">100%</span>
      </div>
    </footer>
  );
}

// ---------- Windows taskbar ----------

function TaskButton({ label, className, underline, children }) {
  return (
    <button aria-label={label} className={clsx('relative flex shrink-0 items-center justify-center', className || 'w-[49px]')}>
      {children}
      {underline && <span className="absolute inset-x-[5px] bottom-0 h-[2px] bg-[#76b9ed]" />}
    </button>
  );
}

const EdgeIcon = () => (
  <Svg w={24} h={24}>
    <defs>
      <linearGradient id="edgeTop" x1="0" y1="0.3" x2="1" y2="0.6">
        <stop offset="0" stopColor="#2a9fe0" />
        <stop offset="0.6" stopColor="#35c8c0" />
        <stop offset="1" stopColor="#6ee05a" />
      </linearGradient>
    </defs>
    <circle cx="12" cy="12" r="12" fill="#1477cf" />
    <path d="M0.500 10C1.500 4 6.500 0 12 0c7 0 12 5 12 10.500 0 4-3 6-6 6-2.500 0-4-1-3.500-2 1.500-2 .5-5.500-4-6.500C6 7 2 8 0.500 10z" fill="url(#edgeTop)" />
    <path d="M10.500 8C6.500 10 6 15 8.500 18.500c3 4 8.500 4 13 1C18 24.500 11 25.500 6 22.500 1.500 19 1 13 5 9.500 7 8 9 7.500 10.500 8z" fill="#0f5aa8" />
    <path d="M11.500 10.500c-2 2-1.500 6 2 7.500 3 1.500 6.500 1.500 9.500 0l1-2.500c-2 1.500-5 1.500-7 1-2-.5-3-1.500-2.500-2.500 1-1.500 0-3.500-3-3.500z" fill="#24343c" />
  </Svg>
);

const ExplorerIcon = () => (
  <Svg w={22} h={18}>
    <path d="M0 0h9l2 2H0z" fill="#e0a00a" />
    <path d="M0 3l10 0 2-1h10v16H0z" fill="#fdd158" />
    <path d="M4 10.500h14V18h-3.500v-4h-7v4H4z" fill="#3a96dd" />
    <path d="M0 17h4v1H0zM18 17h4v1h-4z" fill="#e0a00a" />
  </Svg>
);

const MailIcon = () => (
  <Svg w={24} h={22}>
    <path d="M0 7l12-7 12 7v15H0z" fill="#0f5aa8" />
    <path d="M2 7h20l-10 8z" fill="#eef2f5" />
    <path d="M0 7l12 8L24 7v15H0z" fill="#2ba0e8" />
    <path d="M24 7L9 17l-9 5h24z" fill="#45c4f5" />
    <path d="M0 22l9-7 3 2 3-2 9 7z" fill="#32aef0" />
  </Svg>
);

const StoreIcon = () => (
  <Svg w={23} h={24}>
    <path d="M6 7V1h11v6" stroke="#e8e8e8" strokeWidth="1.500" />
    <path d="M0 6h23v17a1 1 0 0 1-1 1H1a1 1 0 0 1-1-1z" fill="#f3f3f3" />
    <path d="M7 11h4v4H7z" fill="#f25022" />
    <path d="M12 11h4v4h-4z" fill="#7fba00" />
    <path d="M7 16h4v4H7z" fill="#00a4ef" />
    <path d="M12 16h4v4h-4z" fill="#ffb900" />
  </Svg>
);

const ChromeIcon = () => (
  <Svg w={22} h={22}>
    <circle cx="11" cy="11" r="11" fill="#f7cb4d" />
    <path d="M1.500 5.500A11 11 0 0 1 20.500 5.500H11L6.200 13.800z" fill="#d9574a" />
    <path d="M1.500 5.500L6.300 13.800 15.700 13.800 11 22A11 11 0 0 1 1.500 5.500z" fill="#1fa463" />
    <circle cx="11" cy="11" r="5.200" fill="#fff" />
    <circle cx="11" cy="11" r="4.300" fill="#4a86f0" />
  </Svg>
);

const ExcelIcon = () => (
  <Svg w={22} h={22}>
    <path d="M12 2h10v18H12z" fill="#f5f8f5" stroke="#1e7145" />
    <path d="M14 4.500h3M18 4.500h3M14 7.500h3M18 7.500h3M14 10.500h3M18 10.500h3M14 13.500h3M18 13.500h3M14 16.500h3M18 16.500h3" stroke="#2e8b57" strokeWidth="1.500" />
    <path d="M0 2.500L13 0v22L0 19.500z" fill="#1e7145" />
    <path d="M4 7l5 8M9 7l-5 8" stroke="#fff" strokeWidth="2" />
  </Svg>
);

function Taskbar() {
  return (
    <div className="flex h-10 shrink-0 bg-[linear-gradient(90deg,#25353d_0%,#2a373d_45%,#1f2e37_65%,#262a29_74%,#1f2f38_84%,#22333c_100%)] text-white">
      <button aria-label="Start" className="flex w-12 shrink-0 items-center justify-center">
        <Svg w={16} h={16}>
          <path d="M0 2.200L7 1.200v6.300H0zM8 1l8-1v7.500H8zM0 8.500h7v6.300l-7-1zM8 8.500h8V16l-8-1.100z" fill="#fff" />
        </Svg>
      </button>
      <label className="flex w-[344px] shrink-0 items-center gap-[11px] border border-[#c0c0c0] bg-[#f2f2f2] pl-[11px]">
        <Svg w={17} h={17}>
          <circle cx="10.500" cy="6.500" r="5.500" stroke="#222" strokeWidth="1.300" />
          <path d="M6.500 10.500L1 16" stroke="#222" strokeWidth="1.300" />
        </Svg>
        <input aria-label="Search" placeholder="Type here to search" className="min-w-0 flex-1 bg-transparent text-[14px] outline-none placeholder:text-[#444]" />
      </label>
      <TaskButton label="Cortana" className="w-12">
        <Svg w={16} h={16}><circle cx="8" cy="8" r="6.500" stroke="#fff" strokeWidth="2.200" /></Svg>
      </TaskButton>
      <TaskButton label="Task View" className="w-12">
        <Svg w={16} h={16} crisp>
          <path d="M0.500 0v3.500h9V0M0.500 16v-3.500h9V16M0.500 5.500h9v5h-9zM14.500 0v3M14.500 8v8" stroke="#fff" />
          <path d="M13 4h3v3h-3z" fill="#fff" />
        </Svg>
      </TaskButton>
      <div className="ml-[3px] flex">
        <TaskButton label="Microsoft Edge"><EdgeIcon /></TaskButton>
        <TaskButton label="File Explorer" underline><ExplorerIcon /></TaskButton>
        <TaskButton label="Mail"><MailIcon /></TaskButton>
        <TaskButton label="Microsoft Store"><StoreIcon /></TaskButton>
        <TaskButton label="Google Chrome" underline><ChromeIcon /></TaskButton>
        <TaskButton label="Zalo">
          <span className="flex size-6 items-center justify-center rounded-[9px] border-b border-l-2 border-[#0a5cff] bg-white text-[9px] font-bold text-[#1468ff]">
            Zalo
          </span>
          <span className="absolute bottom-0 left-1 h-[2px] w-[31px] bg-[#76b9ed]" />
          <span className="absolute bottom-0 right-[6px] h-[2px] w-2 bg-[#4f7d9f]" />
        </TaskButton>
        <TaskButton label="Excel" className="w-12 border-b-2 border-r-[3px] border-b-[#ff7800] border-r-[#955a28] bg-[#ac6731] pl-[3px]">
          <ExcelIcon />
        </TaskButton>
      </div>

      <div className="ml-auto flex shrink-0 items-center text-[12px]">
        <button aria-label="News and interests" className="flex w-12 justify-center">
          <Svg w={24} h={16}>
            <path d="M1 1h19v14H1zM20 3.500h3V13a2 2 0 0 1-3 0" stroke="#fff" strokeWidth="1.500" />
            <path d="M3 3.500h15M12 7.500h6M12 10h6M12 12.500h6" stroke="#fff" strokeWidth="1.300" />
            <path d="M4 7h5v5H4z" stroke="#fff" strokeWidth="1.500" />
          </Svg>
        </button>
        <button aria-label="Show hidden icons" className="flex w-6 justify-center">
          <Svg w={12} h={7}><path d="M0.500 6.500L6 1l5.500 5.500" stroke="#fff" strokeWidth="1.300" /></Svg>
        </button>
        <button aria-label="Meet Now" className="flex w-6 justify-center">
          <Svg w={12} h={16}>
            <path d="M1 4.500h7v7H1zM8 7l3-2v6L8 9M2.500 1.500c2-1.300 5-1.300 7 0M2.500 14.500c2 1.300 5 1.300 7 0" stroke="#fff" />
          </Svg>
        </button>
        <button aria-label="Sync" className="flex w-6 justify-center">
          <Svg w={17} h={17}>
            <path d="M1 2.500L15.500 1v12M1 2.500V14.500l7 .5" stroke="#fff" strokeWidth="1.200" />
            <path d="M5 7c1-2.500 4.500-2.500 5.500-1M11 3.500v3H8M10.500 8.500c-1 2.500-4 2.500-5.500 1M4.500 12v-2.500H7" stroke="#fff" />
            <circle cx="13" cy="13" r="3.700" fill="#ff9500" />
          </Svg>
        </button>
        <button aria-label="Battery" className="flex w-6 justify-center">
          <Svg w={16} h={13}>
            <path d="M2.500 1.500h12v8h-12zM0 4h2v3H0z" stroke="#fff" />
            <circle cx="11" cy="8" r="4.700" fill="#e0202e" />
            <path d="M9.200 6.200l3.600 3.600M12.800 6.200L9.200 9.800" stroke="#fff" strokeWidth="1.300" />
          </Svg>
        </button>
        <button aria-label="Network" className="flex w-7 justify-center">
          <Svg w={13} h={14}>
            <path d="M0.700 13C1 6 6 1.500 12 1M3.500 13.500C4 8.500 7.500 5 12 4.500M6.500 13.500c.5-3 2.500-5 5.500-5.500M9.500 13.500c.3-1.500 1-2.300 2.500-2.700" stroke="#c8ced2" strokeWidth="1.200" />
            <circle cx="11.500" cy="12.500" r="1.300" fill="#fff" />
          </Svg>
        </button>
        <button className="w-[27px] text-[11px]">ENG</button>
        <button className="w-[75px] text-[11px] leading-[18px]">
          3:28 PM
          <br />
          19-Nov-21
        </button>
        <button aria-label="Notifications" className="relative flex w-8 justify-center">
          <Svg w={16} h={15}>
            <path d="M0 0h16v11h-7l-4 4v-4H0z" fill="#fff" />
            <path d="M3 3.500h10M3 5.500h10M3 7.500h7" stroke="#22333c" />
          </Svg>
          <span className="absolute -bottom-2 right-0 flex size-4 items-center justify-center rounded-full border border-[#9aa3a8] bg-[#333c42] text-[11px] font-bold">
            1
          </span>
        </button>
        <button aria-label="Show desktop" className="ml-[11px] h-10 w-[5px] border-l border-[#6d787e]" />
      </div>
    </div>
  );
}

export default function App() {
  return (
    <div className="flex h-screen flex-col overflow-hidden bg-[#e6e6e6] font-['Open_Sans','Noto_Sans',sans-serif]">
      <TitleBar />
      <RibbonTabs />
      <Ribbon />
      <FormulaBar />
      <main className="flex min-h-0 flex-1">
        <Sheet />
        <div className="mx-[3px] mt-[2px] flex w-[15px] flex-col bg-[#dadada]">
          <ScrollButton label="Scroll up" d="M0.500 6h7L4 2z" />
          <span className="h-[118px] border border-[#ababab] bg-white" />
          <ScrollButton label="Scroll down" d="M0.500 2h7L4 6z" className="mt-auto" />
        </div>
      </main>
      <SheetBar />
      <StatusBar />
      <Taskbar />
    </div>
  );
}
